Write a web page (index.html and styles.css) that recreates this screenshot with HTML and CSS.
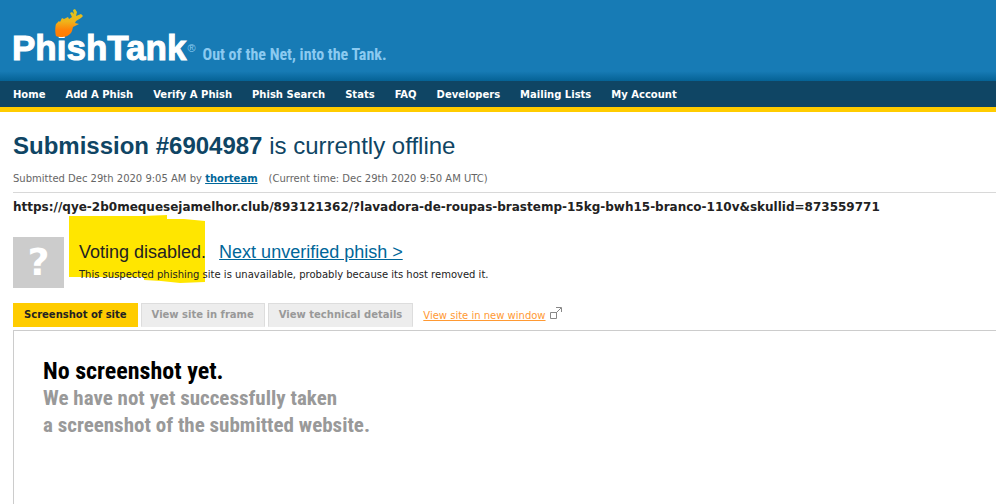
FILE: index.html
```
<!DOCTYPE html>
<html lang="en">
<head>
<meta charset="utf-8">
<title>PhishTank | Submission #6904987</title>
<link rel="stylesheet" href="styles.css">
</head>
<body>
<header class="banner">
  <a class="logo" href="#">PhishTank<svg class="flame" viewBox="0 0 28 28" aria-hidden="true">
    <defs><linearGradient id="fire" x1="0" y1="0" x2="0" y2="1"><stop offset="0" stop-color="#ddc81c"/><stop offset=".45" stop-color="#f0b31a"/><stop offset=".75" stop-color="#ff8208"/><stop offset="1" stop-color="#ff7c00"/></linearGradient></defs>
    <path fill="url(#fire)" d="M1 27C0 24 0 18 1 15L4 12L5 13L7 9L9 10L13 8L14 10L17 8L15 4L17 3L19 5L18 1L20 0L22 3L21 7L26 5L28 7L26 9L21 12L20 14L24 15L22 16L18 18L17 22C15 27 10 28 6 28Q2 28 1 27Z"/>
  </svg></a><span class="mark">®</span>
  <span class="tagline">Out of the Net, into the Tank.</span>
</header>
<nav class="menu">
  <a href="#">Home</a>
  <a href="#">Add A Phish</a>
  <a href="#">Verify A Phish</a>
  <a href="#">Phish Search</a>
  <a href="#">Stats</a>
  <a href="#">FAQ</a>
  <a href="#">Developers</a>
  <a href="#">Mailing Lists</a>
  <a href="#">My Account</a>
</nav>
<main class="content">
  <h1 class="title"><b>Submission #6904987</b> is currently offline</h1>
  <p class="meta"><span>Submitted Dec 29th 2020 9:05 AM by <a href="#">thorteam</a></span><span>(Current time: Dec 29th 2020 9:50 AM UTC)</span></p>
  <p class="url">https://qye-2b0mequesejamelhor.club/893121362/?lavadora-de-roupas-brastemp-15kg-bwh15-branco-110v&amp;skullid=873559771</p>
  <section class="vote">
    <div class="unknown">?</div>
    <div class="status">
      <svg class="marker" viewBox="0 0 136 68" aria-hidden="true"><path fill="#ffe600" d="M0 1L74 1L98 0V4H115L136 6V67L111 68L92 66L75 65V62H0Z"/></svg>
      <h2>Voting disabled. <a href="#">Next unverified phish &gt;</a></h2>
      <p>This suspected phishing site is unavailable, probably because its host removed it.</p>
    </div>
  </section>
  <div class="tabs">
    <button class="tab active" type="button">Screenshot of site</button>
    <button class="tab" type="button">View site in frame</button>
    <button class="tab" type="button">View technical details</button>
    <a class="external" href="#"><span>View site in new window</span><svg viewBox="0 0 12 13" aria-hidden="true"><path d="M.5 5.500H6.500V11.500H.5ZM6 6L11 1M6 .5H11.500V5" fill="none" stroke="#888"/></svg></a>
  </div>
  <section class="panel">
    <h3>No screenshot yet.</h3>
    <p>We have not yet successfully taken<br>a screenshot of the submitted website.</p>
  </section>
</main>
</body>
</html>
```
FILE: styles.css
```
* { box-sizing: border-box; }
html, body { height: 100%; }
body {
  margin: 0;
  display: flex;
  flex-direction: column;
  background: #fff;
  color: #222;
  font-family: Verdana, "DejaVu Sans", sans-serif;
  font-size: 10px;
}
h1, h2, h3, p { margin: 0; }
.banner {
  display: flex;
  align-items: baseline;
  padding: 24px 12px 9px;
  background: linear-gradient(#177bb5 0, #177bb5 88%, #056295 100%);
}
.logo {
  position: relative;
  color: #fff;
  font: bold 35px/48px "Liberation Sans", sans-serif;
  -webkit-text-stroke: 1px #fff;
  text-decoration: none;
}
.flame {
  position: absolute;
  left: 43px;
  top: -15px;
  width: 28px;
  height: 28px;
}
.mark {
  align-self: center;
  margin-left: 1px;
  color: #8bcaf0;
  font: 11px/16px "Liberation Sans", sans-serif;
}
.tagline {
  margin-left: 7px;
  color: #8bcaf0;
  font: bold 16px/20px "Roboto Condensed", "Liberation Sans", sans-serif;
}
.menu {
  display: flex;
  flex-wrap: wrap;
  gap: 0 20px;
  padding: 7px 13px 5px;
  border-bottom: 5px solid #fc0;
  background: #0f4564;
  font-weight: bold;
  line-height: 14px;
}
.menu a { color: #fff; text-decoration: none; }
.content {
  flex: 1;
  display: flex;
  flex-direction: column;
  padding: 16px 0 0 13px;
}
.title {
  color: #0f4564;
  font: 24px/36px "Liberation Sans", sans-serif;
}
.meta {
  display: flex;
  gap: 11px;
  padding: 7px 0 5px;
  border-bottom: 1px solid #d8d8d8;
  color: #666;
  line-height: 16px;
}
.meta a { color: #069; font-weight: bold; }
.url {
  padding: 4px 0;
  font-size: 12px;
  font-weight: bold;
  line-height: 20px;
}
.vote { display: flex; gap: 15px; margin-top: 16px; }
.unknown {
  width: 51px;
  height: 51px;
  background: #ccc;
  color: #fff;
  font: bold 38px/51px "DejaVu Sans", sans-serif;
  text-align: center;
}
.status { position: relative; z-index: 0; }
.status h2 { font: 18px/31px "Liberation Sans", sans-serif; }
.status h2 a { margin-left: 8px; color: #069; }
.status p { line-height: 14px; }
.marker {
  position: absolute;
  z-index: -1;
  left: -10px;
  top: -22px;
  width: 136px;
  height: 68px;
}
.tabs { display: flex; align-items: center; gap: 3px; margin: 15px 0 3px; }
.tab {
  padding: 0 10px;
  border: 1px solid #ddd;
  border-bottom-color: #ededed;
  background: #ededed;
  color: #999;
  font: bold 10px/22px Verdana, "DejaVu Sans", sans-serif;
}
.tab.active { border-color: #fc0; background: #fc0; color: #222; }
.external {
  display: flex;
  align-items: center;
  gap: 4px;
  margin-left: 7px;
  color: #f93;
}
.external svg { width: 12px; height: 13px; margin-bottom: 4px; }
.panel {
  flex: 1;
  padding: 27px 29px;
  border: solid #ccc;
  border-width: 1px 0 0 1px;
  color: #999;
  font: bold 21px/27px "Roboto Condensed", "Liberation Sans", sans-serif;
}
.panel h3 { color: #000; font: inherit; font-size: 24px; }
```
